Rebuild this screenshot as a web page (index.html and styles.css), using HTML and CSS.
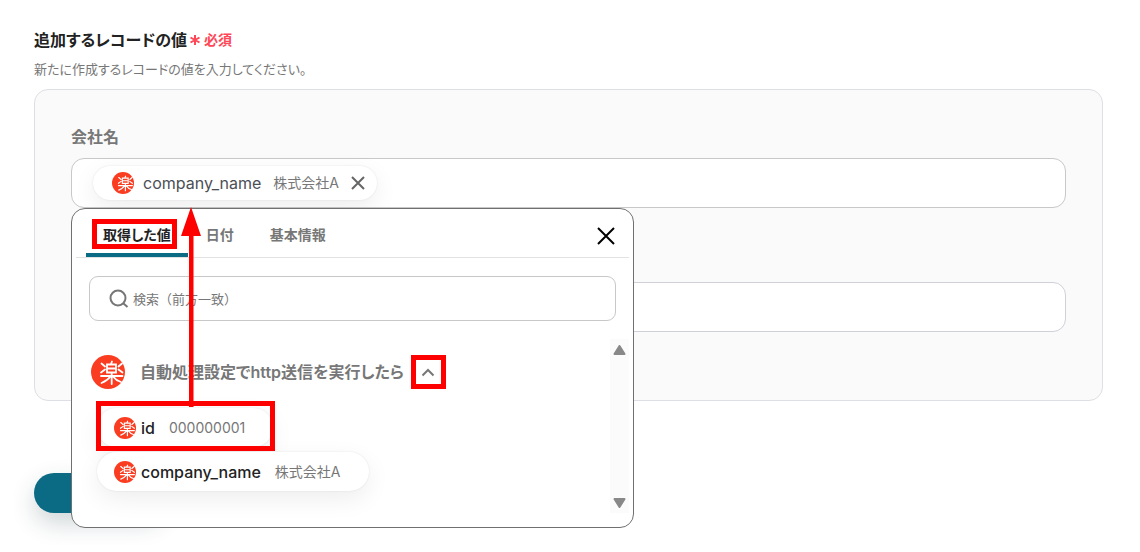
FILE: index.html
```html
<!DOCTYPE html>
<html lang="ja">
<head>
<meta charset="utf-8">
<title>レコードの追加</title>
<link rel="stylesheet" href="styles.css">
</head>
<body>
<svg class="symbols" aria-hidden="true">
  <symbol id="raku" viewBox="0 0 34 34">
    <circle cx="17" cy="17" r="17" fill="#fa3c20"/>
    <g fill="none" stroke="#fff" stroke-width="1.8" stroke-linecap="round">
      <path d="M21 6.500l-1 2.500M16 9.500h9v8h-9zM16 13.500h9M10.500 8.500l3.500 3M14 14.500l-4 3M31 8.500l-3.500 3M27.500 14.500l4 3M10 21h21.500M20.700 18v11M19.500 21.500q-3 4-9 6.500M22 21.500q3 4 8 5.500"/>
    </g>
  </symbol>
</svg>
<main class="page">
  <header class="heading">
    <h1 class="title">追加するレコードの値</h1>
    <span class="required"><svg class="asterisk" viewBox="0 0 12 12" aria-hidden="true"><path d="M6 1v10M1.500 3.500l9 5M10.500 3.500l-9 5"/></svg>必須</span>
  </header>
  <p class="description">新たに作成するレコードの値を入力してください。</p>

  <section class="card">
    <div class="field">
      <label class="field-label" for="company">会社名</label>
      <div class="token-box">
        <span class="chip chip-selected">
          <svg class="icon-small" aria-hidden="true"><use href="#raku"/></svg>
          <span class="chip-key">company_name</span>
          <span class="chip-value">株式会社A</span>
          <button class="chip-remove" type="button" aria-label="削除"><svg viewBox="0 0 14 14"><path d="M1 1l12 12M13 1L1 13"/></svg></button>
        </span>
        <input class="token-input" id="company" type="text">
      </div>

      <div class="picker">
        <div class="picker-head">
          <div class="tabs">
            <button class="tab tab-active" type="button">取得した値<span class="mark mark-tab"></span></button>
            <button class="tab" type="button">日付</button>
            <button class="tab" type="button">基本情報</button>
          </div>
          <button class="close" type="button" aria-label="閉じる"><svg viewBox="0 0 18 18"><path d="M1 1l16 16M17 1L1 17"/></svg></button>
        </div>
        <div class="search">
          <svg class="search-icon" viewBox="0 0 20 20" aria-hidden="true"><circle cx="9" cy="9" r="7.500"/><path d="M14.500 14.500l4 3.500"/></svg>
          <input class="search-input" type="text" placeholder="検索（前方一致）" aria-label="検索">
        </div>
        <div class="results">
          <div class="result-list">
            <div class="group">
              <svg class="icon-large" aria-hidden="true"><use href="#raku"/></svg>
              <span class="group-name">自動処理設定でhttp送信を実行したら</span>
              <button class="toggle" type="button" aria-label="折りたたむ"><svg viewBox="0 0 14 9"><path d="M1.500 7.500L7 2l5.500 5.500"/></svg></button>
            </div>
            <div class="options">
              <button class="chip option" type="button">
                <svg class="icon-small" aria-hidden="true"><use href="#raku"/></svg>
                <span class="option-key">id</span>
                <span class="option-value">000000001</span>
                <span class="mark mark-option"></span>
              </button>
              <button class="chip option" type="button">
                <svg class="icon-small" aria-hidden="true"><use href="#raku"/></svg>
                <span class="option-key">company_name</span>
                <span class="option-value">株式会社A</span>
              </button>
            </div>
          </div>
          <div class="scrollbar" aria-hidden="true">
            <svg viewBox="0 0 12 10"><path d="M6 1l5 8H1z"/></svg>
            <svg viewBox="0 0 12 10"><path d="M6 9l5-8H1z"/></svg>
          </div>
        </div>
        <svg class="arrow" viewBox="0 0 20 200" aria-hidden="true"><path d="M10 0l10 29h-7.500v171H8V29H0z"/></svg>
      </div>
    </div>
    <div class="field">
      <label class="field-label" for="second">ID</label>
      <input class="text-box" id="second" type="text">
    </div>
  </section>

  <button class="submit" type="button" aria-label="保存"></button>
</main>
</body>
</html>
```
FILE: styles.css
```css
* { box-sizing: border-box; }
body {
  margin: 0;
  background: #fff;
  color: #222;
  font-family: Inter, "Noto Sans CJK JP", sans-serif;
  font-size: 16px;
  line-height: 24px;
  font-feature-settings: "palt";
}
button, input { font: inherit; color: inherit; font-feature-settings: inherit; }
button { border: 0; padding: 0; background: none; display: flex; align-items: center; }
svg { display: block; flex: none; fill: none; stroke: currentColor; }
.symbols { position: absolute; width: 0; height: 0; }
.page { padding: 28px 37px 32px 34px; }
.heading { display: flex; align-items: center; gap: 2px; }
.title { margin: 0; font-size: 16px; font-weight: 600; }
.required { display: flex; align-items: center; gap: 3px; color: #ff4757; font-size: 14px; font-weight: 600; }
.asterisk { width: 12px; height: 12px; stroke-width: 2; }
.description { margin: 7px 0 10px; color: #777; font-size: 13px; line-height: 20px; }
.card {
  display: flex;
  flex-direction: column;
  gap: 41px;
  padding: 35px 36px 68px;
  border: 1px solid #dedfe5;
  border-radius: 14px;
  background: #fafafa;
}
.field { position: relative; display: flex; flex-direction: column; gap: 9px; }
.field-label { color: #777; font-weight: 600; }
.token-box {
  display: flex;
  align-items: center;
  height: 50px;
  padding: 0 21px;
  border: 1px solid #c8c8c8;
  border-radius: 13px;
  background: #fff;
}
.token-input { flex: 1; min-width: 0; border: 0; outline: 0; background: none; }
.text-box { width: 100%; height: 50px; padding: 0 20px; border: 1px solid #cfd1d8; border-radius: 13px; background: #fff; }
.chip { display: flex; align-items: center; border-radius: 20px; background: #fff; box-shadow: 0 0 2px rgba(0,0,0,.1), 0 8px 24px rgba(0,0,0,.07); }
.chip-selected { height: 34px; padding: 0 12px 0 19px; }
.icon-small { width: 22px; height: 22px; stroke: none; }
.chip-key { margin-left: 9px; color: #4b4f55; font-size: 16px; }
.chip-value { margin-left: 12px; color: #777; font-size: 14px; }
.chip-remove { margin-left: 12px; color: #666; }
.chip-remove svg { width: 14px; height: 14px; stroke-width: 2; }
.picker {
  position: absolute;
  top: 83px;
  left: 0;
  z-index: 1;
  width: 563px;
  padding: 0 4px 14px;
  border: 1px solid #707070;
  border-radius: 14px;
  background: #fff;
}
.picker-head { display: flex; align-items: center; justify-content: space-between; padding: 0 14px 0 10px; border-bottom: 1px solid #e2e2e2; }
.tabs { display: flex; }
.tab { position: relative; height: 48px; padding: 4px 18px 0; color: #777; font-size: 14px; font-weight: 600; }
.tab-active { color: #222; border-bottom: 4px solid #0b6b84; border-radius: 3px 3px 0 0; padding: 8px 17px 0; }
.close { color: #000; padding-top: 5px; }
.close svg { width: 18px; height: 18px; stroke-width: 2; }
.search { display: flex; align-items: center; gap: 4px; height: 45px; margin: 18px 13px; padding: 0 19px; border: 1px solid #c8c8c8; border-radius: 9px; }
.search-icon { width: 20px; height: 20px; color: #777; stroke-width: 2; }
.search-input { flex: 1; min-width: 0; padding: 0; border: 0; outline: 0; background: none; font-size: 13px; font-feature-settings: normal; }
.search-input::placeholder { color: #777; opacity: 1; }
.results { display: flex; justify-content: space-between; }
.result-list { padding: 16px 0 22px 15px; }
.group { display: flex; align-items: center; }
.icon-large { width: 34px; height: 34px; stroke: none; }
.group-name { margin-left: 15px; color: #777; font-weight: 600; }
.toggle { justify-content: center; width: 35px; height: 34px; margin-left: 7px; border: 5px solid #f00; color: #777; }
.toggle svg { width: 14px; height: 9px; stroke-width: 2; }
.options { display: flex; flex-direction: column; align-items: flex-start; gap: 5px; padding: 19px 0 0 6px; }
.option { position: relative; height: 39px; padding: 0 28px 0 17px; }
.option-key { margin-left: 5px; color: #222; font-size: 16px; font-weight: 500; }
.option-value { margin-left: 14px; color: #777; font-size: 14px; }
.scrollbar { display: flex; flex-direction: column; justify-content: space-between; width: 19px; padding: 6px 3px 5px; background: #fbfbfb; color: #888; }
.scrollbar svg { width: 13px; height: 10px; fill: currentColor; stroke-width: 2; stroke-linejoin: round; }
.mark { position: absolute; border: 5px solid #f00; }
.mark-tab { inset: 10px 11px 4px 6px; }
.mark-option { inset: -7px -2px -4px -1px; }
.arrow { position: absolute; left: 109px; top: -2px; width: 20px; height: 200px; fill: #f00; stroke: none; }
.submit { width: 130px; height: 40px; margin-top: 72px; border-radius: 20px; background: #0b6b84; box-shadow: 0 10px 24px rgba(20,50,60,.2); }
```
